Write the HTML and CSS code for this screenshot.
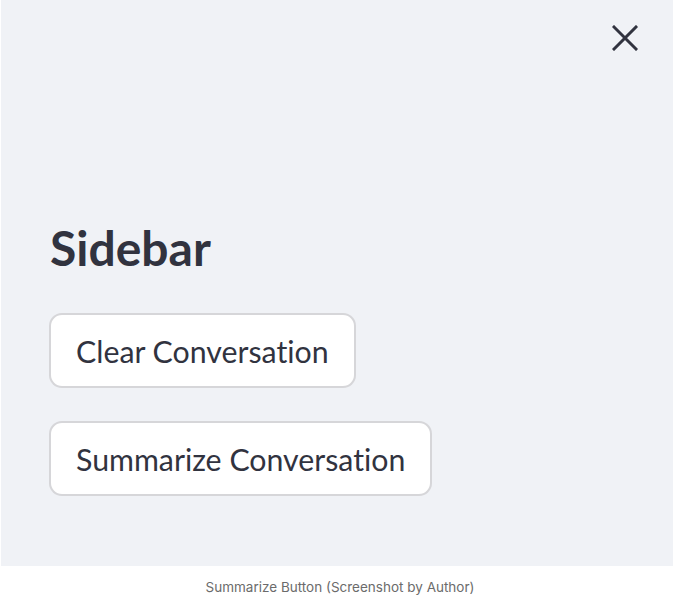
FILE: index.html
```html
<!DOCTYPE html>
<html>
<head>
<meta charset="utf-8">
<link rel="stylesheet" href="styles.css">
</head>
<body>
<div class="frame">
  <aside class="sidebar">
    <div class="top">
      <button class="close" aria-label="Close">
        <svg width="26" height="26" viewBox="0 0 26 26"><path d="M2 2 L24 24 M24 2 L2 24" stroke="#31333F" stroke-width="3" stroke-linecap="square"/></svg>
      </button>
    </div>
    <h3 class="title">Sidebar</h3>
    <div class="actions">
      <button class="btn">Clear Conversation</button>
      <button class="btn">Summarize Conversation</button>
    </div>
  </aside>
  <p class="caption">Summarize Button (Screenshot by Author)</p>
</div>
</body>
</html>
```
FILE: styles.css
```css
html, body { margin: 0; padding: 0; background: #ffffff; }
.frame { width: 680px; }
.sidebar {
  box-sizing: border-box;
  margin-left: 1px;
  width: 672px;
  height: 566px;
  background: #F0F2F6;
  padding: 25px 35px 0 48px;
  display: flex;
  flex-direction: column;
  align-items: flex-start;
}
.top { align-self: stretch; display: flex; justify-content: flex-end; }
.close {
  border: 0; background: transparent; padding: 0; margin: 0;
  width: 26px; height: 26px; display: block;
}
.close svg { display: block; }
.title {
  font-family: "Lato", "Noto Sans", sans-serif;
  font-weight: 700;
  font-size: 48px;
  line-height: 1;
  color: #31333F;
  margin: 173px 0 0 1px;
  font-variant-ligatures: none;
}
.actions { display: flex; flex-direction: column; align-items: flex-start; gap: 33px; margin-top: 41px; }
.btn {
  box-sizing: border-box;
  height: 75px;
  padding: 0 25px;
  background: #FFFFFF;
  border: 2px solid rgba(49, 51, 63, 0.2);
  border-radius: 13px;
  font-family: "Lato", "Noto Sans", sans-serif;
  font-size: 30.3px;
  color: #31333F;
  font-variant-ligatures: none;
}
.caption {
  margin: 0;
  padding-top: 13px;
  text-align: center;
  font-family: "Inter", "Roboto", sans-serif;
  font-size: 13.5px;
  color: #6B6B6B;
}
```
